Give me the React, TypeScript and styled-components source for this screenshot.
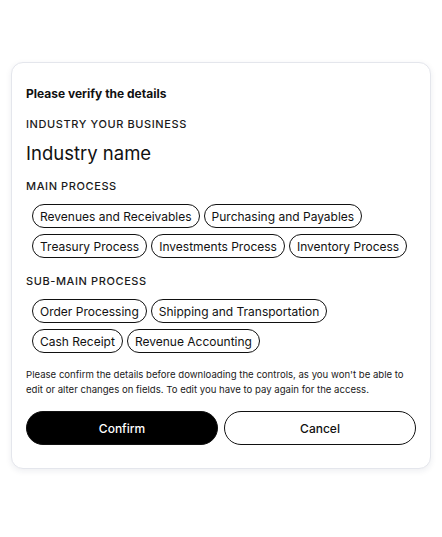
import styled, { createGlobalStyle } from 'styled-components';

const MAIN_PROCESSES = [
  'Revenues and Receivables',
  'Purchasing and Payables',
  'Treasury Process',
  'Investments Process',
  'Inventory Process',
];

const SUB_PROCESSES = [
  'Order Processing',
  'Shipping and Transportation',
  'Cash Receipt',
  'Revenue Accounting',
];

const GlobalStyle = createGlobalStyle`
  * {
    box-sizing: border-box;
  }
  body {
    margin: 0;
    background: #fff;
    font-family: Inter, 'Noto Sans', sans-serif;
    color: #111;
  }
`;

export default function App() {
  return (
    <Page>
      <GlobalStyle />
      <Card>
        <Heading>Please verify the details</Heading>
        <Label $top={14}>INDUSTRY YOUR BUSINESS</Label>
        <IndustryName>Industry name</IndustryName>
        <Label $top={12}>MAIN PROCESS</Label>
        <ChipList>
          {MAIN_PROCESSES.map((item) => (
            <Chip key={item}>{item}</Chip>
          ))}
        </ChipList>
        <Label $top={15}>SUB-MAIN PROCESS</Label>
        <ChipList>
          {SUB_PROCESSES.map((item) => (
            <Chip key={item}>{item}</Chip>
          ))}
        </ChipList>
        <Notice>
          Please confirm the details before downloading the controls, as you won't be able to
          edit or alter changes on fields. To edit you have to pay again for the access.
        </Notice>
        <Actions>
          <Button $primary>Confirm</Button>
          <Button>Cancel</Button>
        </Actions>
      </Card>
    </Page>
  );
}

const Page = styled.div`
  padding: 62px 11px;
`;

const Card = styled.div`
  display: flex;
  flex-direction: column;
  padding: 23px 14px 23px 14px;
  border: 1px solid #e4e6ec;
  border-radius: 12px;
  background: #fff;
  box-shadow: 0 2px 6px rgba(30, 40, 80, 0.08);
`;

const Heading = styled.h2`
  margin: 0;
  font-size: 12px;
  line-height: 16px;
  font-weight: 700;
  color: #111;
`;

const Label = styled.p<{ $top: number }>`
  margin: ${(p) => p.$top}px 0 0;
  font-size: 11px;
  line-height: 16px;
  font-weight: 500;
  letter-spacing: 0.6px;
  color: #1a1a1a;
`;

const IndustryName = styled.p`
  margin: 8px 0 0;
  font-size: 18.5px;
  line-height: 26px;
  font-weight: 400;
  color: #111;
`;

const ChipList = styled.div`
  display: flex;
  flex-wrap: wrap;
  gap: 6px 4px;
  margin-top: 10px;
  padding-left: 6px;
`;

const Chip = styled.span`
  display: inline-flex;
  align-items: center;
  height: 24px;
  padding: 0 7px;
  border: 1px solid #111;
  border-radius: 999px;
  font-size: 12px;
  color: #111;
  white-space: nowrap;
`;

const Notice = styled.p`
  margin: 14px 0 0;
  font-size: 9.6px;
  line-height: 15px;
  color: #1a1a1a;
`;

const Actions = styled.div`
  display: grid;
  grid-template-columns: 1fr 1fr;
  gap: 6px;
  margin-top: 14px;
`;

const Button = styled.button<{ $primary?: boolean }>`
  height: 34px;
  border-radius: 999px;
  border: 1px solid #111;
  background: ${(p) => (p.$primary ? '#000' : '#fff')};
  color: ${(p) => (p.$primary ? '#fff' : '#111')};
  font-family: inherit;
  font-size: 12px;
  font-weight: 500;
  cursor: pointer;
`;
